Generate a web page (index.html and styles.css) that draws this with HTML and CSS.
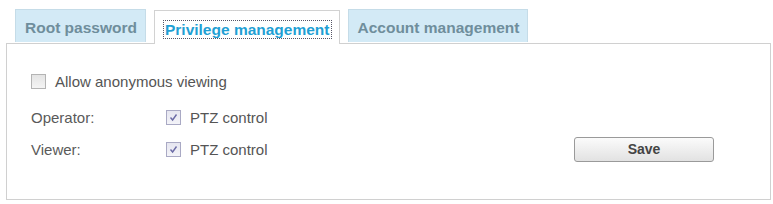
FILE: index.html
```html
<!DOCTYPE html>
<html lang="en">
<head>
  <meta charset="UTF-8">
  <title>Security</title>
  <link rel="stylesheet" href="styles.css">
</head>
<body>
  <div class="wrap">
    <div class="tabs">
      <div class="tab">Root password</div>
      <div class="tab active"><span class="focus">Privilege management</span></div>
      <div class="tab">Account management</div>
    </div>

    <div class="panel">
      <div class="row first">
        <span class="box"></span>
        <span class="text">Allow anonymous viewing</span>
      </div>
      <div class="row">
        <span class="label">Operator:</span>
        <span class="box checked">
          <svg width="9" height="9" viewBox="0 0 9 9"><path d="M1.5 4.5 L3.6 7 L7.5 1.5" fill="none" stroke="#6b6ba6" stroke-width="1.4"/></svg>
        </span>
        <span class="text">PTZ control</span>
      </div>
      <div class="row">
        <span class="label">Viewer:</span>
        <span class="box checked">
          <svg width="9" height="9" viewBox="0 0 9 9"><path d="M1.5 4.5 L3.6 7 L7.5 1.5" fill="none" stroke="#6b6ba6" stroke-width="1.4"/></svg>
        </span>
        <span class="text">PTZ control</span>
        <button class="save">Save</button>
      </div>
    </div>
  </div>
</body>
</html>
```

FILE: styles.css
```css
body {
  margin: 0;
  background: #fff;
  font-family: "Liberation Sans", Arial, sans-serif;
  color: #555;
}

.wrap {
  padding: 9px 2px 0 6px;
}

.tabs {
  display: flex;
  gap: 8px;
  padding-left: 9px;
  position: relative;
  z-index: 1;
}

.tab {
  height: 33px;
  box-sizing: border-box;
  padding: 3px 8px 0 9px;
  display: flex;
  align-items: center;
  background: #d3eaf6;
  border: 1px solid #c5dce8;
  border-bottom: none;
  font-size: 15.5px;
  font-weight: bold;
  color: #6f8e9c;
}

.tab.active {
  background: #fff;
  border-color: #d2d2d2;
  height: 34px;
  margin-top: 1px;
  color: #1f9fd4;
}

.focus {
  outline: 1px dotted #556;
  outline-offset: 0;
  line-height: 17px;
  padding: 0 1px;
}

.panel {
  border: 1px solid #d0d0d0;
  margin-top: -1px;
  height: 157px;
  box-sizing: border-box;
  padding: 27px 56px 0 24px;
}

.row {
  display: flex;
  align-items: center;
  height: 20px;
  margin-bottom: 12px;
  font-size: 15px;
}

.row.first {
  margin-bottom: 16px;
}

.label {
  width: 135px;
  color: #5a5a5a;
}

.box {
  width: 13px;
  height: 13px;
  border: 1px solid #b4b4b4;
  background: linear-gradient(#e4e4e4, #f4f4f4);
  display: flex;
  align-items: center;
  justify-content: center;
  margin-right: 9px;
}

.box.checked {
  border-color: #a9a9c4;
  background: linear-gradient(#e6e6f0, #f3f3f8);
}

.text {
  color: #555;
}

.save {
  margin-left: auto;
  width: 140px;
  height: 25px;
  border: 1px solid #9a9a9a;
  border-radius: 3px;
  background: linear-gradient(#fbfbfb, #e2e2e2);
  font-family: "Liberation Sans", Arial, sans-serif;
  font-size: 14px;
  font-weight: bold;
  color: #444;
}
```
